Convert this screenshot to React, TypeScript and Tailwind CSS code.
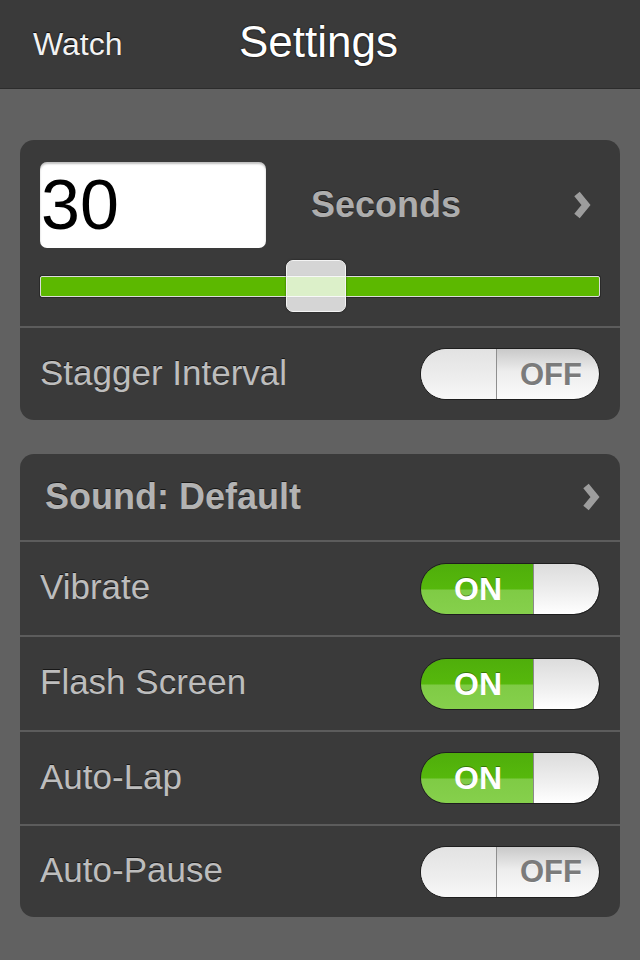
import React from "react";

// ----------------------------------------------------------------------------
// Pieces
// ----------------------------------------------------------------------------

const font = "font-['Liberation_Sans','Helvetica',Arial,sans-serif]";

function Chevron() {
  return (
    <svg width="22" height="30" viewBox="0 0 22 30" className="shrink-0">
      <polyline
        points="6,4 15,15 6,26"
        fill="none"
        stroke="#9d9d9d"
        strokeWidth="7"
        strokeLinejoin="miter"
      />
    </svg>
  );
}

function Toggle({ on }: { on: boolean }) {
  if (on) {
    return (
      <div className="flex h-[52px] w-[180px] shrink-0 overflow-hidden rounded-full border border-[#1e1e1e]">
        <div className="flex w-[112px] items-center justify-center bg-[linear-gradient(to_bottom,#4fae0b_0%,#56b80c_50%,#7fcb45_52%,#86d04c_100%)] pl-[2px]">
          <span className="text-[32px] font-bold leading-none text-white [text-shadow:0_-1px_0_rgba(0,0,0,0.35)]">
            ON
          </span>
        </div>
        <div className="flex-1 rounded-l-[4px] rounded-r-full border-l border-[#8a8a8a] bg-[linear-gradient(to_bottom,#dcdcdc,#f0f0f0_60%,#ffffff)]" />
      </div>
    );
  }
  return (
    <div className="flex h-[52px] w-[180px] shrink-0 overflow-hidden rounded-full border border-[#1e1e1e] bg-[linear-gradient(to_bottom,#c9c9c9,#ededed_45%,#fbfbfb)]">
      <div className="w-[76px] rounded-l-full rounded-r-[4px] border-r border-[#8f8f8f] bg-[linear-gradient(to_bottom,#e2e2e2,#eeeeee_60%,#f8f8f8)]" />
      <div className="flex flex-1 items-center justify-center pl-[6px]">
        <span className="text-[31px] font-bold leading-none text-[#7b7b7b] [text-shadow:0_1px_0_rgba(255,255,255,0.7)]">
          OFF
        </span>
      </div>
    </div>
  );
}

function Divider() {
  return <div className="h-[2px] bg-[#5c5c5c]" />;
}

function ToggleRow({ label, on, h }: { label: string; on: boolean; h: string }) {
  return (
    <div className={`flex items-center justify-between pl-[20px] pr-[20px] ${h}`}>
      <span className="-mt-[4px] text-[35px] leading-none text-[#bdbdbd] [text-shadow:0_-1px_0_rgba(0,0,0,0.6)]">
        {label}
      </span>
      <Toggle on={on} />
    </div>
  );
}

// ----------------------------------------------------------------------------
// App
// ----------------------------------------------------------------------------

export default function App() {
  return (
    <div className={`h-[960px] w-[640px] overflow-hidden bg-[#616161] ${font}`}>
      {/* Header */}
      <div className="relative flex h-[89px] items-center border-b border-[#2c2c2c] bg-[#3a3a3a]">
        <span className="pl-[33px] text-[32px] leading-none text-[#f2f2f2] [text-shadow:0_-1px_1px_rgba(0,0,0,0.9)]">
          Watch
        </span>
        <span className="absolute left-[239px] top-[20px] text-[44px] leading-none text-white [text-shadow:0_0_2px_rgba(0,0,0,1)]">
          Settings
        </span>
      </div>

      <div className="flex flex-col gap-[34px] px-[20px] pt-[51px]">
        {/* Interval card */}
        <div className="overflow-hidden rounded-[14px] bg-[#3a3a3a]">
          <div className="px-[20px] pt-[22px] pb-[14px]">
            <div className="flex items-center">
              <div className="flex h-[86px] w-[226px] items-center rounded-[7px] bg-white pl-[1px] shadow-[inset_0_2px_2px_rgba(0,0,0,0.25)]">
                <span className="text-[70px] leading-none text-black">30</span>
              </div>
              <span className="ml-[45px] text-[36px] font-bold leading-none text-[#adadad] [text-shadow:0_-1px_0_rgba(0,0,0,0.6)]">
                Seconds
              </span>
              <div className="ml-auto mr-[7px]">
                <Chevron />
              </div>
            </div>
            <div className="relative mt-[12px] flex h-[52px] items-center">
              <div className="h-[21px] w-full rounded-[2px] border border-[#dcdcdc] bg-[#5cb800] shadow-[0_0_0_1px_#2a2a2a]" />
              <div className="absolute left-[246px] top-0 h-[52px] w-[60px] rounded-[7px] border border-[#f4f4f4] bg-[rgba(255,255,255,0.79)] shadow-[0_0_2px_rgba(0,0,0,0.6)]" />
            </div>
          </div>
          <Divider />
          <ToggleRow label="Stagger Interval" on={false} h="h-[92px]" />
        </div>

        {/* Sound card */}
        <div className="overflow-hidden rounded-[14px] bg-[#3a3a3a]">
          <div className="flex h-[86px] items-center justify-between pl-[25px] pr-[18px]">
            <span className="text-[36px] font-bold leading-none text-[#b3b3b3] [text-shadow:0_-1px_0_rgba(0,0,0,0.6)]">
              Sound: Default
            </span>
            <Chevron />
          </div>
          <Divider />
          <ToggleRow label="Vibrate" on h="h-[93px]" />
          <Divider />
          <ToggleRow label="Flash Screen" on h="h-[93px]" />
          <Divider />
          <ToggleRow label="Auto-Lap" on h="h-[92px]" />
          <Divider />
          <ToggleRow label="Auto-Pause" on={false} h="h-[91px]" />
        </div>
      </div>
    </div>
  );
}
